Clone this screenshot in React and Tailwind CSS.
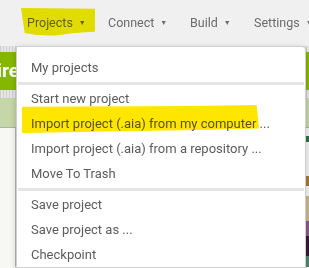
import React from 'react';

const NAV = [
  { label: 'Projects', w: 'w-[81px]', mark: true },
  { label: 'Connect', w: 'w-[82px]' },
  { label: 'Build', w: 'w-[64px]' },
  { label: 'Settings', w: 'w-[60px]' },
];

function Caret() {
  return <span className="ml-[6px] text-[7px] leading-none">▼</span>;
}

// freehand highlighter stroke, multiplied over the text below it
function Marker({ className, color, d }) {
  return (
    <svg className={`pointer-events-none absolute mix-blend-multiply ${className}`} viewBox="0 0 100 100" preserveAspectRatio="none">
      <path d={d} fill={color} />
    </svg>
  );
}

function Item({ children, mark }) {
  return (
    <div className="relative flex h-[25px] items-center pl-[14px] whitespace-nowrap">
      {children}
      {mark && (
        <Marker
          className="left-[5px] top-[-6px] h-[28px] w-[237px]"
          color="#ffe600"
          d="M0 6 L72 4 L99 0 L100 84 L80 88 L0 100 Z"
        />
      )}
    </div>
  );
}

function Sep() {
  return <div className="mx-[1px] mt-[2px] mb-[1px] h-[3px] bg-[#e5e5e5]" />;
}

export default function App() {
  return (
    <div className="relative h-[268px] w-[309px] overflow-hidden bg-[#f7f7f3] font-['Roboto',sans-serif] text-[13px]">
      {/* top nav */}
      <div className="flex h-[46px] items-center bg-[#f0f0f0] pl-[27px] text-[12.5px] text-[#6b6b6b]">
        {NAV.map((n) => (
          <div key={n.label} className={`relative flex h-[16px] shrink-0 items-center ${n.w}`}>
            <span className="relative">{n.label}</span>
            <Caret />
            {n.mark && (
              <Marker
                className="left-[-6px] top-[-7px] h-[29px] w-[74px]"
                color="#f0ea00"
                d="M0 0 L100 3 L100 82 Q70 86 55 92 Q30 100 5 86 Z"
              />
            )}
          </div>
        ))}
      </div>

      {/* page behind the menu */}
      <div className="h-[6px] bg-[repeating-linear-gradient(90deg,#cfcfcf_0_1px,#e6e6e6_1px_3px)]" />
      <div className="flex h-[38px] items-center bg-[#84b800] text-[19px] font-bold text-white">
        <span className="-ml-[3px]">ire</span>
      </div>
      <div className="h-[8px] bg-[repeating-linear-gradient(90deg,#cfcfcf_0_1px,#e6e6e6_1px_3px)]" />
      <div className="h-[30px] border-b border-[#a8b890] bg-[#c5d6a8]" />
      <div className="flex h-[139px]">
        <div className="w-[16px] border-r border-[#b8b8b8] bg-[#f7f7f3]" />
        <div className="flex-1" />
        <div className="flex w-[4px] flex-col">
          <div className="h-[8px] bg-[#f4f4f4]" />
          <div className="h-[6px] bg-[#2e6e48]" />
          <div className="h-[34px] bg-[#f4f4f4]" />
          <div className="h-[10px] bg-[#a87a30]" />
          <div className="h-[10px] bg-[#f4f4f4]" />
          <div className="h-[25px] bg-[#cdb88c]" />
          <div className="h-[15px] bg-[#8a5a8a]" />
          <div className="h-[20px] bg-[#3a1a3a]" />
          <div className="flex-1 bg-[#4a8a70]" />
        </div>
      </div>

      {/* dropdown */}
      <div className="absolute bottom-0 left-[16px] top-[46px] w-[290px] rounded-tr-[4px] border border-[#cfcfcf] bg-white pt-[8px] text-[#5c5c5c] shadow-[0_2px_6px_rgba(0,0,0,0.2)]">
        <Item>My projects</Item>
        <Sep />
        <Item>Start new project</Item>
        <Item mark>Import project (.aia) from my computer ...</Item>
        <Item>Import project (.aia) from a repository ...</Item>
        <Item>Move To Trash</Item>
        <Sep />
        <Item>Save project</Item>
        <Item>Save project as ...</Item>
        <Item>Checkpoint</Item>
      </div>
    </div>
  );
}
